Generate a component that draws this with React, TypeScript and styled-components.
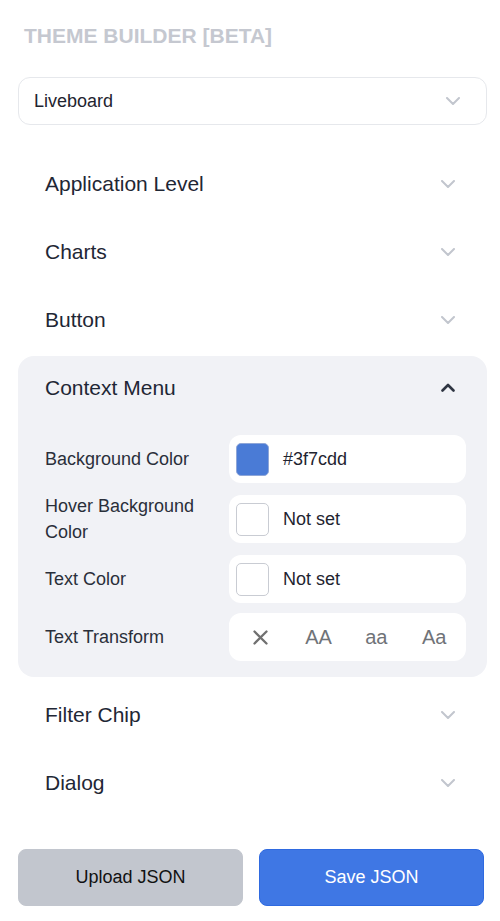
import React from "react";
import styled, { createGlobalStyle } from "styled-components";

const GlobalStyle = createGlobalStyle`
  html, body { margin: 0; padding: 0; background: #ffffff; }
  body { font-family: "Liberation Sans", Arial, Helvetica, sans-serif; }
  * { box-sizing: border-box; }
`;

const Page = styled.div`
  width: 500px;
  padding: 22px 13px 15px 18px;
  display: flex;
  flex-direction: column;
`;

const Title = styled.h1`
  margin: 0 0 0 6px;
  font-size: 21px;
  line-height: 28px;
  font-weight: 700;
  color: #c5c8d0;
  letter-spacing: 0;
`;

const Select = styled.div`
  margin-top: 27px;
  height: 48px;
  border: 1px solid #e6e8ec;
  border-radius: 12px;
  padding: 0 26px 0 15px;
  display: flex;
  align-items: center;
  justify-content: space-between;
  font-size: 18px;
  color: #1f2430;
`;

const List = styled.div`
  margin-top: 27px;
  display: flex;
  flex-direction: column;
  gap: 6px;
`;

const Item = styled.div<{ $open?: boolean }>`
  background: ${(p) => (p.$open ? "#f1f2f6" : "transparent")};
  border-radius: 16px;
`;

const Header = styled.div`
  height: 62px;
  padding: 1px 27px 0;
  display: flex;
  align-items: center;
  justify-content: space-between;
  font-size: 21px;
  color: #1f2735;
`;

const IconBox = styled.span`
  width: 24px;
  height: 24px;
  display: flex;
  align-items: center;
  justify-content: center;
`;

const Content = styled.div`
  padding: 17px 21px 16px 27px;
  display: flex;
  flex-direction: column;
  gap: 10px;
`;

const Row = styled.div`
  display: grid;
  grid-template-columns: 168px 1fr;
  column-gap: 16px;
  align-items: center;
  min-height: 48px;
`;

const Label = styled.div`
  font-size: 18px;
  line-height: 26px;
  color: #2a2f3a;
`;

const Field = styled.div`
  height: 48px;
  background: #ffffff;
  border-radius: 12px;
  padding: 0 7px;
  display: flex;
  align-items: center;
  gap: 14px;
  font-size: 18px;
  color: #1f2430;
`;

const Swatch = styled.span<{ $color?: string }>`
  width: 33px;
  height: 33px;
  border-radius: 5px;
  background: ${(p) => p.$color || "#ffffff"};
  border: ${(p) => (p.$color ? "1px solid #8ea6d8" : "1.5px solid #c9ccd3")};
`;

const Segments = styled.div`
  height: 48px;
  background: #ffffff;
  border-radius: 12px;
  padding: 0 3px;
  display: grid;
  grid-template-columns: repeat(4, 1fr);
  align-items: center;
`;

const Segment = styled.span`
  display: flex;
  align-items: center;
  justify-content: center;
  font-size: 20px;
  color: #707378;
`;

const Footer = styled.div`
  margin-top: 36px;
  display: grid;
  grid-template-columns: 225px 225px;
  column-gap: 16px;
`;

const Button = styled.button<{ $primary?: boolean }>`
  height: 57px;
  border-radius: 8px;
  border: 1px solid ${(p) => (p.$primary ? "#2f6ae0" : "#c2c6ce")};
  background: ${(p) => (p.$primary ? "#3f77e4" : "#c2c6ce")};
  color: ${(p) => (p.$primary ? "#ffffff" : "#111111")};
  font-family: "Liberation Sans", Arial, sans-serif;
  font-size: 18px;
  padding: 0;
`;

const ChevronDown = ({ color = "#c2c6ce" }: { color?: string }) => (
  <svg width="14" height="8" viewBox="0 0 14 8" fill="none">
    <path d="M1 1l6 6 6-6" stroke={color} strokeWidth="2" strokeLinecap="round" strokeLinejoin="round" />
  </svg>
);

const ChevronUp = () => (
  <svg width="14" height="9" viewBox="0 0 14 9" fill="none">
    <path d="M1.5 7.5L7 2l5.5 5.5" stroke="#2f3542" strokeWidth="2.6" strokeLinecap="round" strokeLinejoin="round" />
  </svg>
);

const XIcon = () => (
  <svg width="15" height="15" viewBox="0 0 15 15" fill="none">
    <path d="M1.5 1.5l12 12M13.5 1.5l-12 12" stroke="#707070" strokeWidth="2.3" strokeLinecap="round" />
  </svg>
);

const closedTop = ["Application Level", "Charts", "Button"];
const closedBottom = ["Filter Chip", "Dialog"];

const ClosedItem = ({ title }: { title: string }) => (
  <Item>
    <Header>
      <span>{title}</span>
      <IconBox>
        <ChevronDown />
      </IconBox>
    </Header>
  </Item>
);

export default function App() {
  return (
    <>
      <GlobalStyle />
      <Page>
        <Title>THEME BUILDER [BETA]</Title>
        <Select>
          <span>Liveboard</span>
          <ChevronDown />
        </Select>
        <List>
          {closedTop.map((t) => (
            <ClosedItem key={t} title={t} />
          ))}
          <Item $open>
            <Header>
              <span>Context Menu</span>
              <IconBox>
                <ChevronUp />
              </IconBox>
            </Header>
            <Content>
              <Row>
                <Label>Background Color</Label>
                <Field>
                  <Swatch $color="#4a7bd6" />
                  <span>#3f7cdd</span>
                </Field>
              </Row>
              <Row>
                <Label>Hover Background Color</Label>
                <Field>
                  <Swatch />
                  <span>Not set</span>
                </Field>
              </Row>
              <Row>
                <Label>Text Color</Label>
                <Field>
                  <Swatch />
                  <span>Not set</span>
                </Field>
              </Row>
              <Row>
                <Label>Text Transform</Label>
                <Segments>
                  <Segment>
                    <XIcon />
                  </Segment>
                  <Segment>AA</Segment>
                  <Segment>aa</Segment>
                  <Segment>Aa</Segment>
                </Segments>
              </Row>
            </Content>
          </Item>
          {closedBottom.map((t) => (
            <ClosedItem key={t} title={t} />
          ))}
        </List>
        <Footer>
          <Button>Upload JSON</Button>
          <Button $primary>Save JSON</Button>
        </Footer>
      </Page>
    </>
  );
}
